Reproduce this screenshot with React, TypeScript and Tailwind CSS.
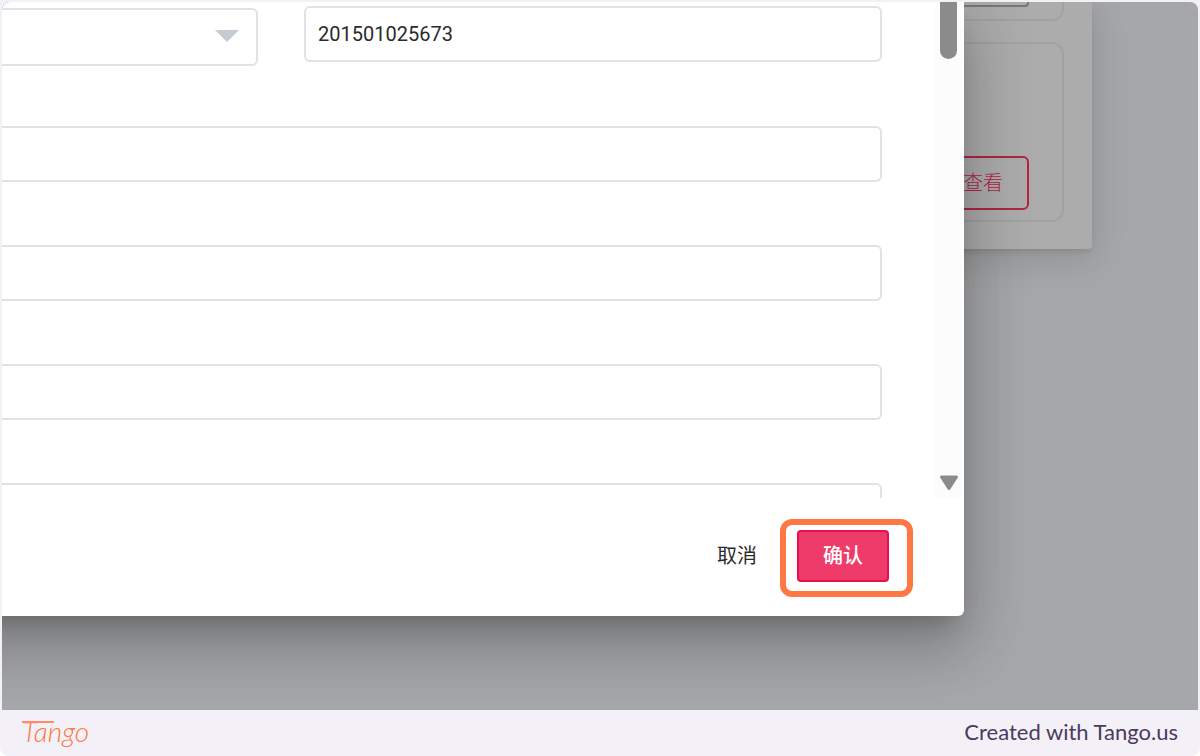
const fields = ["address", "contact", "email", "remark"]

const PageCard = () => {
    return (
      <div className="mr-[106px] flex flex-col gap-[21px] rounded-br bg-[#acacac] pr-7 pb-[27px] shadow-[0_4px_6px_-2px_rgba(0,0,0,0.12),0_8px_36px_4px_rgba(0,0,0,0.12)]">
        <div className="flex h-[19px] items-start justify-end rounded-br-xl border-2 border-t-0 border-[#a1a2a2] pr-[33px]">
          <div className="h-[5px] w-24 rounded-b border-2 border-t-0 border-[#777]" />
        </div>
        <div className="flex h-[180px] items-end justify-end rounded-xl border-2 border-[#a1a2a2] pr-[33px] pb-[10px]">
          <button className="h-[54px] rounded-md border-2 border-[#b02546] px-6 text-xl font-light text-[#b02546]">查看</button>
        </div>
      </div>
    )
}

const ScrollBar = () => {
    return (
      <div className="mr-[2px] flex w-[27px] flex-col items-center justify-between bg-[#fcfcfc] pb-[7px]">
        <div className="h-[57px] w-[17px] rounded-b-full bg-[#8b8b8b]" />
        <svg width="20" height="16" viewBox="0 0 20 16" fill="#8b8b8b" stroke="#8b8b8b" strokeWidth="3" strokeLinejoin="round">
          <path d="M2.5 2h15L10 13.5z" />
        </svg>
      </div>
    )
}

const Dialog = () => {
    return (
      <div
        role="dialog"
        className="absolute top-0 right-[234px] -left-16 rounded-br-md bg-white pl-16 shadow-[0_16px_22px_-10px_rgba(0,0,0,0.2),0_35px_55px_4px_rgba(0,0,0,0.14),0_13px_67px_12px_rgba(0,0,0,0.12)]"
      >
        <div className="flex h-[496px] overflow-hidden">
          <div className="min-w-0 flex-1 pt-1 pr-[53px]">
            {/* Type and number */}
            <div className="mb-[60px] flex h-[60px] items-start gap-[46px]">
              <div className="relative w-64 self-end">
                <select aria-label="type" className="block h-[58px] w-full appearance-none rounded-r-md border-2 border-l-0 border-[#e2e2e2] bg-white" />
                <svg className="pointer-events-none absolute top-[22px] right-[19px]" width="24" height="12" viewBox="0 0 24 12" fill="#c5cad3">
                  <path d="M0 0h24L12 12z" />
                </svg>
              </div>
              <input
                aria-label="number"
                defaultValue="201501025673"
                className="h-14 min-w-0 flex-1 rounded-md border-2 border-[#e2e2e2] px-3 font-[Roboto,sans-serif] text-xl text-[#2b2b2b]"
              />
            </div>

            <div className="flex flex-col gap-[63px]">
              {fields.map((name) => (
                <input key={name} aria-label={name} className="h-14 w-full shrink-0 rounded-r-md border-2 border-l-0 border-[#e2e2e2]" />
              ))}
            </div>
          </div>
          <ScrollBar />
        </div>

        {/* Actions */}
        <div className="flex justify-end gap-4 pt-8 pr-[75px] pb-[34px] text-xl">
          <button className="h-[52px] px-6 text-[#2b2b2b]">取消</button>
          <div className="relative">
            <button className="h-[52px] rounded border-2 border-[#e60f4f] bg-[#ef3b69] px-6 font-medium text-white">确认</button>
            <div className="pointer-events-none absolute -top-[11px] -right-6 -bottom-[15px] -left-[17px] rounded-xl border-6 border-[#ff7742]" />
          </div>
        </div>
      </div>
    )
}

const App = () => {
    return (
      <div className="flex h-screen flex-col rounded-b-lg bg-[#f3f1f7] px-[2px] pt-[2px] font-[Roboto,'Noto_Sans_CJK_SC',sans-serif]">
        <main className="relative flex-1 overflow-hidden rounded-t-lg bg-[#a6a7a9]">
          <PageCard />
          <Dialog />
        </main>
        <footer className="flex h-[46px] items-center justify-between px-5 pb-1 font-[Lato,sans-serif]">
          <a href="#" className="relative text-[28px] leading-8 font-light text-[#ff7742] italic">
            <span className="absolute top-[6px] left-0 h-[2px] w-8 bg-[#ff8c62]" />
            Tango
          </a>
          <p className="text-[22px] text-[#4a3a5e]">Created with Tango.us</p>
        </footer>
      </div>
    )
}

export default App
